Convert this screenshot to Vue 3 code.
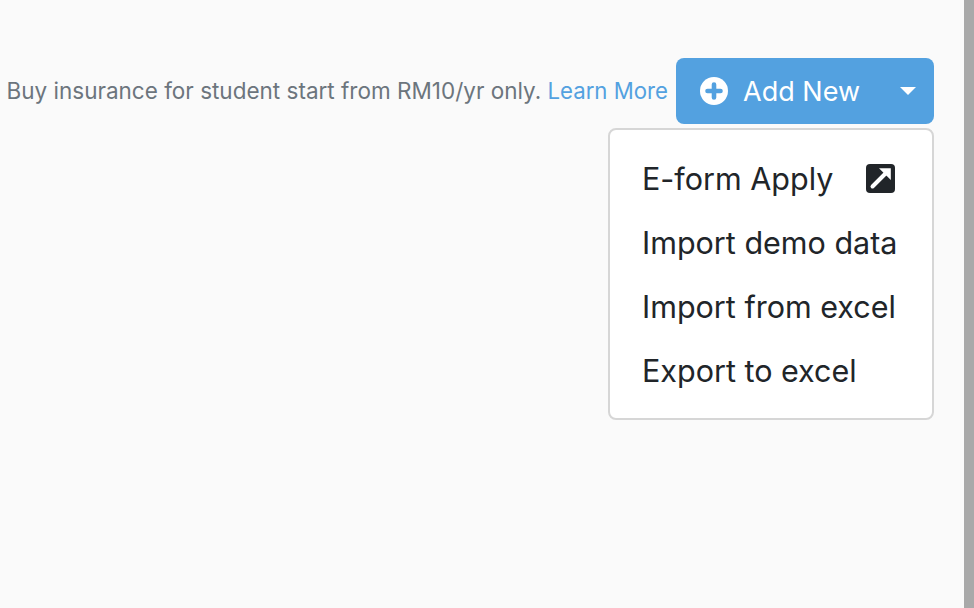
<script setup>
const items = ['Import demo data', 'Import from excel', 'Export to excel']
</script>

<template>
  <div class="page">
    <main class="main">
      <div class="bar">
        <p class="promo">Buy insurance for student start from RM10/yr only. <a class="link">Learn More</a></p>
        <div class="dropdown">
          <button class="btn">
            <svg class="plus" width="28" height="28" viewBox="0 0 28 28">
              <circle cx="14" cy="14" r="14" fill="#fff" />
              <path d="M14 7.5v13M7.5 14h13" stroke="#53a1e0" stroke-width="4.6" stroke-linecap="round" fill="none" />
            </svg>
            <span class="label">Add New</span>
            <span class="caret"></span>
          </button>
          <div class="menu">
            <div class="item">
              <span>E-form Apply</span>
              <svg class="ext" width="29" height="29" viewBox="0 0 29 29">
                <rect width="29" height="29" rx="4" fill="#212529" />
                <path d="M6.5 22.5 19 10" stroke="#fff" stroke-width="4" stroke-linecap="round" fill="none" />
                <path d="M13 4.3h11.8v11.8z" fill="#fff" />
              </svg>
            </div>
            <div v-for="item in items" :key="item" class="item">{{ item }}</div>
          </div>
        </div>
      </div>
    </main>
    <div class="scrollbar"></div>
  </div>
</template>

<style scoped>
.page {
  display: flex;
  height: 608px;
  overflow: hidden;
  background: #fafafa;
  font-family: Inter, "Liberation Sans", sans-serif;
}
.main {
  flex: 1;
  padding: 58px 30px 0 0;
}
.bar {
  display: flex;
  justify-content: flex-end;
  align-items: center;
  gap: 8px;
}
.promo {
  margin: 0 0 2px;
  font-size: 22.5px;
  color: #6c757d;
  white-space: nowrap;
}
.link {
  color: #53a1e0;
  font-size: 22.2px;
}
.dropdown {
  position: relative;
}
.btn {
  display: flex;
  align-items: center;
  width: 258px;
  height: 66px;
  padding: 0 24px;
  border: 0;
  border-radius: 8px;
  background: #53a1e0;
  color: #fff;
  font: inherit;
  font-size: 27px;
}
.label {
  margin-left: 15px;
}
.caret {
  margin-left: auto;
  margin-right: -6px;
  border-top: 8px solid #fff;
  border-left: 8px solid transparent;
  border-right: 8px solid transparent;
}
.menu {
  position: absolute;
  top: 70px;
  right: 0;
  box-sizing: border-box;
  width: 326px;
  height: 292px;
  padding: 16px 32px;
  background: #fff;
  border: 2px solid #d6d6d6;
  border-radius: 8px;
}
.item {
  display: flex;
  align-items: center;
  justify-content: space-between;
  height: 64px;
  font-size: 30.5px;
  color: #212529;
  white-space: nowrap;
}
.ext {
  margin-right: 5px;
}
.scrollbar {
  width: 10px;
  background: #a9a9a9;
}
</style>
